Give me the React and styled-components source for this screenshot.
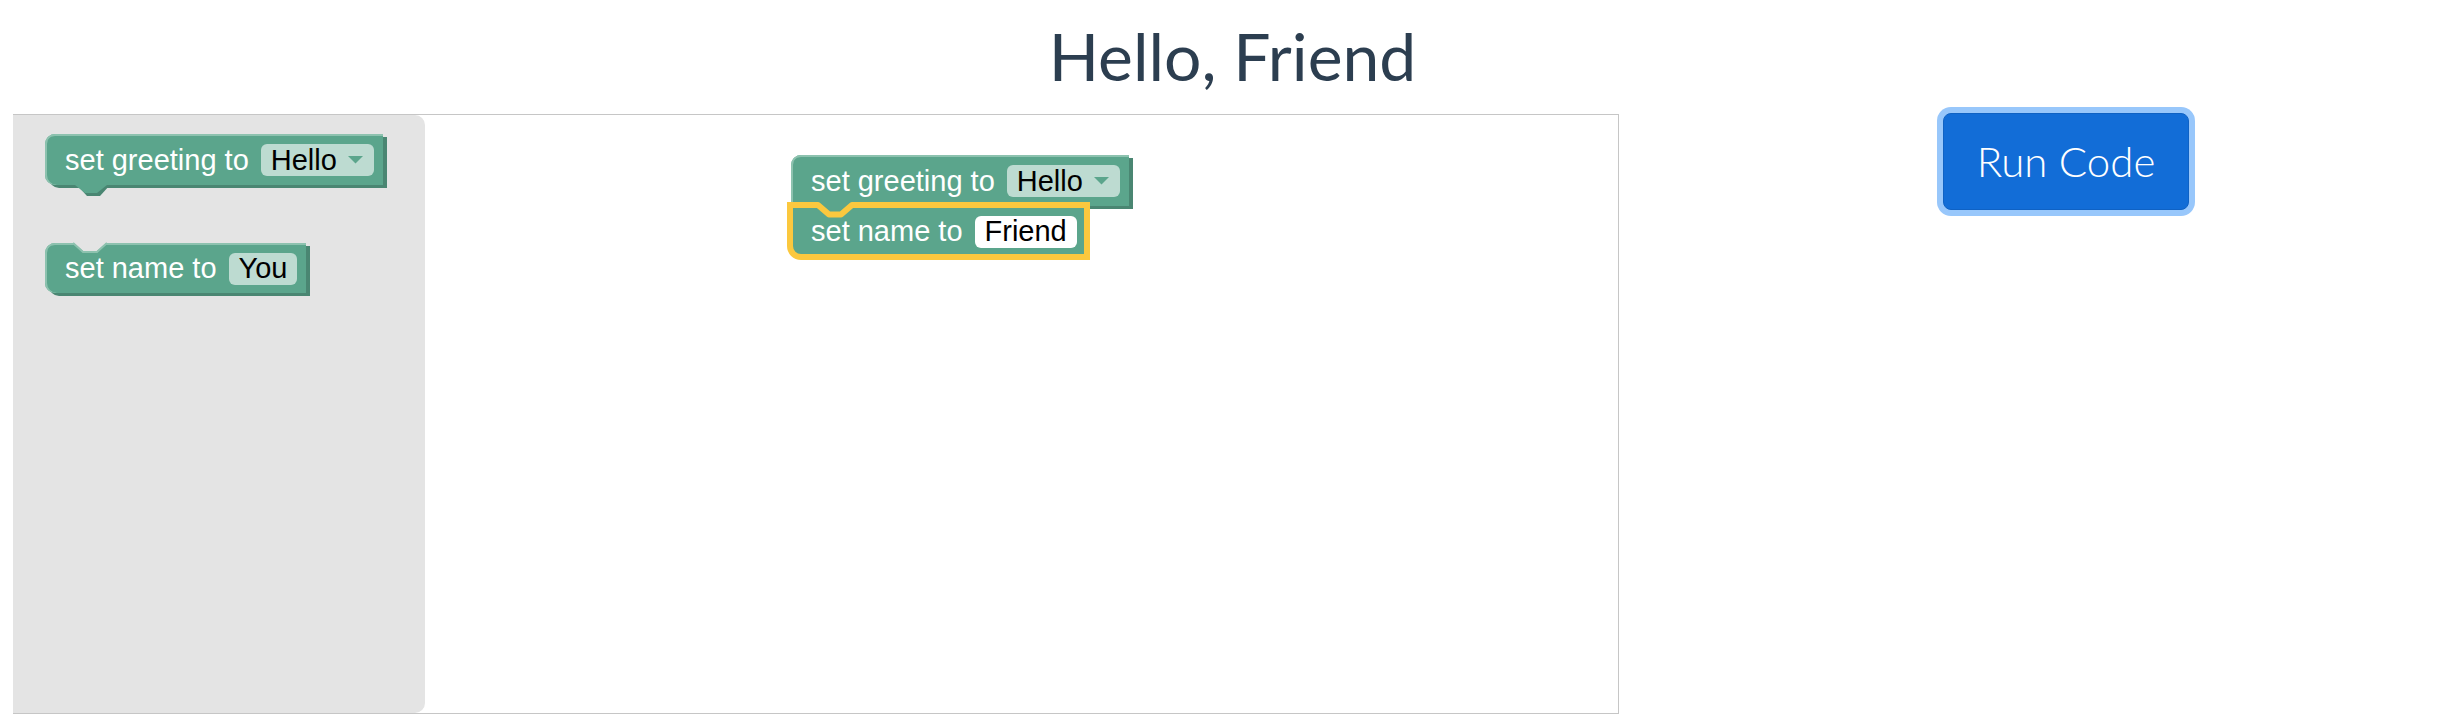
import React from 'react';
import styled, { createGlobalStyle } from 'styled-components';

const GREEN = '#5ba58c';
const DARK = '#4a8672';
const LIGHT = '#8dc2af';
const SELECT = '#fbc83e';
const FLYOUT = '#e4e4e4';

const Global = createGlobalStyle`
  html, body { margin: 0; padding: 0; background: #ffffff; }
  body { font-family: Lato, "Noto Sans", sans-serif; }
  #root { width: 2437px; height: 727px; overflow: hidden; }
`;

const Page = styled.div`
  width: 2437px;
  height: 727px;
`;

const Title = styled.h1`
  margin: 0;
  height: 114px;
  box-sizing: border-box;
  padding: 16px 0 0 28px;
  text-align: center;
  font-family: Lato, "Noto Sans", sans-serif;
  font-weight: 400;
  font-size: 66px;
  line-height: 1.2;
  color: #2c3e50;
`;

const Main = styled.div`
  display: flex;
  align-items: flex-start;
  padding-left: 13px;
`;

const Workspace = styled.div`
  display: flex;
  width: 1606px;
  height: 600px;
  box-sizing: border-box;
  border: 1px solid #c6c6c6;
  border-left: 0;
`;

const Flyout = styled.div`
  width: 412px;
  height: 100%;
  flex: none;
  background: ${FLYOUT};
  border-radius: 0 10px 10px 0;
  display: flex;
  flex-direction: column;
  align-items: flex-start;
  gap: 58px;
  padding: 19px 0 0 32px;
  box-sizing: border-box;
`;

const Canvas = styled.div`
  position: relative;
  flex: 1;
  height: 100%;
  background: #ffffff;
`;

const Stack = styled.div`
  position: absolute;
  left: ${p => p.$x}px;
  top: ${p => p.$y}px;
  display: flex;
  flex-direction: column;
  align-items: flex-start;
`;

const BlockBody = styled.div`
  position: relative;
  display: inline-flex;
  align-items: center;
  gap: 12px;
  height: ${p => p.$h || 50}px;
  box-sizing: border-box;
  padding: 1px 9px 0 20px;
  background: ${GREEN};
  border-radius: ${p => (p.$squareTop ? '0' : '10px')} 0 0 ${p => (p.$squareBottom ? '0' : '10px')};
  box-shadow: ${p =>
    p.$selected
      ? `4px 3px 0 ${DARK}`
      : `inset 0 2px 0 ${LIGHT}, inset 2px 0 0 ${LIGHT}, 4px 3px 0 ${DARK}`};
  outline: ${p => (p.$selected ? `6px solid ${SELECT}` : 'none')};
  outline-offset: -2px;
`;

const Label = styled.span`
  font-family: "Liberation Sans", Arial, sans-serif;
  font-size: 29px;
  color: #ffffff;
  white-space: nowrap;
  line-height: 1;
`;

const Field = styled.span`
  display: inline-flex;
  align-items: center;
  gap: 11px;
  height: 32px;
  box-sizing: border-box;
  padding: 0 ${p => (p.$dropdown ? 11 : 10)}px 0 10px;
  border-radius: 6px;
  background: ${p => (p.$solid ? '#ffffff' : 'rgba(255,255,255,0.6)')};
  font-family: "Liberation Sans", Arial, sans-serif;
  font-size: 29px;
  line-height: 1;
  color: #000000;
  white-space: nowrap;
`;

const Overlay = styled.svg`
  position: absolute;
  left: ${p => p.$left}px;
  top: ${p => p.$top}px;
  z-index: ${p => p.$z || 'auto'};
  overflow: visible;
  pointer-events: none;
`;

const RunButton = styled.button`
  margin-left: 324px;
  margin-top: -1px;
  width: 246px;
  height: 97px;
  box-sizing: border-box;
  background: #126dd7;
  color: #ffffff;
  border: 1px solid #0f62c4;
  border-radius: 8px;
  box-shadow: 0 0 0 6px #98c7fb;
  font-family: Lato, "Noto Sans", sans-serif;
  font-size: 42px;
  font-weight: 300;
  padding: 0 0 2px;
  cursor: pointer;
`;

function Arrow() {
  return (
    <svg width="15" height="8" viewBox="0 0 15 8">
      <polygon points="0,0 15,0 7.5,7.5" fill={GREEN} />
    </svg>
  );
}

function NextTab({ top, connected }) {
  return (
    <Overlay $left={30} $top={top} width="34" height="12" viewBox="0 0 34 12">
      {!connected && <polygon points="2,0 12,11 25,11 35,0" fill={DARK} />}
      <polygon points="0,0 10,8 22,8 32,0" fill={GREEN} />
    </Overlay>
  );
}

function PrevNotch({ bg }) {
  return (
    <Overlay $left={28} $top={-1} width="36" height="12" viewBox="0 0 36 12">
      <polygon points="0,0 10,9 24,9 34,0" fill={bg} />
      <polyline points="0,1 10,10 24,10 34,1" fill="none" stroke={LIGHT} strokeWidth="2" />
    </Overlay>
  );
}

function SelectedNotch() {
  return (
    <Overlay $left={24} $top={-4} $z={2} width="46" height="20" viewBox="0 0 46 20">
      <polygon points="3,-1 37,-1 37,3 26,12.5 14,12.5 3,3" fill={GREEN} />
      <polyline
        points="-2,3 3,3 14,12.5 26,12.5 37,3 42,3"
        fill="none"
        stroke={SELECT}
        strokeWidth="6"
        strokeLinejoin="round"
      />
    </Overlay>
  );
}

function GreetingBlock({ connected }) {
  return (
    <BlockBody $h={51} $squareBottom={connected}>
      <Label>set greeting to</Label>
      <Field $dropdown>
        Hello
        <Arrow />
      </Field>
      <NextTab top={51} connected={connected} />
    </BlockBody>
  );
}

export default function App() {
  return (
    <Page>
      <Global />
      <Title>Hello, Friend</Title>
      <Main>
        <Workspace>
          <Flyout>
            <GreetingBlock />
            <BlockBody>
              <PrevNotch bg={FLYOUT} />
              <Label>set name to</Label>
              <Field>You</Field>
            </BlockBody>
          </Flyout>
          <Canvas>
            <Stack $x={366} $y={40}>
              <GreetingBlock connected />
              <BlockBody $selected $squareTop>
                <SelectedNotch />
                <Label>set name to</Label>
                <Field $solid>Friend</Field>
              </BlockBody>
            </Stack>
          </Canvas>
        </Workspace>
        <RunButton>Run Code</RunButton>
      </Main>
    </Page>
  );
}
